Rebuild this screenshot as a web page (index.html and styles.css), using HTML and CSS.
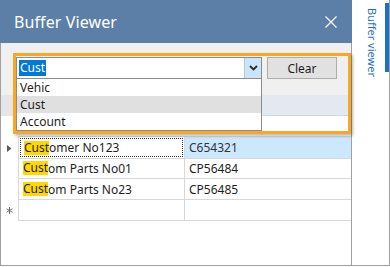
FILE: index.html
```html
<!DOCTYPE html>
<html lang="en">
<head>
    <meta charset="UTF-8">
    <meta name="viewport" content="width=device-width, initial-scale=1.0">
    <title>Buffer Viewer</title>
    <link rel="stylesheet" href="styles.css">
</head>
<body>
    <div class="screen">
        <div class="window">
            <div class="titlebar">
                <span class="title">Buffer Viewer</span>
                <svg class="close" width="12" height="12" viewBox="0 0 12 12">
                    <path d="M0.5 0.5 L11.5 11.5 M11.5 0.5 L0.5 11.5" stroke="#ffffff" stroke-width="1.2" fill="none"/>
                </svg>
            </div>

            <div class="content">
                <div class="toolbar">
                    <div class="combo">
                        <div class="combo-input"><span class="combo-sel">Cust</span></div>
                        <div class="combo-btn">
                            <svg width="9" height="6" viewBox="0 0 9 6">
                                <path d="M1 1 L4.5 4.5 L8 1" stroke="#2b2b2b" stroke-width="1.8" fill="none"/>
                            </svg>
                        </div>
                        <ul class="combo-list">
                            <li>Vehic</li>
                            <li class="hover">Cust</li>
                            <li>Account</li>
                        </ul>
                    </div>
                    <button class="clear-btn">Clear</button>
                </div>

                <div class="grid">
                    <div class="grid-row header">
                        <div class="row-head"></div>
                        <div class="cell"></div>
                        <div class="cell"></div>
                    </div>
                    <div class="grid-row filter">
                        <div class="row-head"></div>
                        <div class="cell"></div>
                        <div class="cell"></div>
                    </div>
                    <div class="grid-row current">
                        <div class="row-head">
                            <svg width="5" height="7" viewBox="0 0 5 7"><path d="M0 0 L4.5 3.5 L0 7 Z" fill="#5a5a5a"/></svg>
                        </div>
                        <div class="cell"><span class="focus"><mark>Cust</mark>omer No123</span></div>
                        <div class="cell selected">C654321</div>
                    </div>
                    <div class="grid-row">
                        <div class="row-head"></div>
                        <div class="cell"><mark>Cust</mark>om Parts No01</div>
                        <div class="cell">CP56484</div>
                    </div>
                    <div class="grid-row">
                        <div class="row-head"></div>
                        <div class="cell"><mark>Cust</mark>om Parts No23</div>
                        <div class="cell">CP56485</div>
                    </div>
                    <div class="grid-row">
                        <div class="row-head">
                            <svg width="7" height="7" viewBox="0 0 7 7">
                                <path d="M3.5 0 V7 M0.5 1.75 L6.5 5.25 M6.5 1.75 L0.5 5.25" stroke="#707070" stroke-width="1" fill="none"/>
                            </svg>
                        </div>
                        <div class="cell"></div>
                        <div class="cell"></div>
                    </div>
                </div>
            </div>

            <div class="focus-frame"></div>
        </div>

        <div class="side">
            <span class="side-label">Buffer viewer</span>
            <div class="side-bar"></div>
        </div>
    </div>
</body>
</html>
```

FILE: styles.css
```css
:root {
    --title-bg: #5b7fa6;
    --panel-bg: #f0f0f0;
    --border: #a0a0a0;
    --grid-line: #d8d8d8;
    --text: #1e1e1e;
    --accent: #1f6fc2;
    --orange: #f9a825;
}

* {
    margin: 0;
    padding: 0;
    box-sizing: border-box;
}

body {
    font-family: "Noto Sans", "Open Sans", sans-serif;
    font-size: 12px;
    color: var(--text);
    background: #ffffff;
    width: 390px;
    height: 267px;
    overflow: hidden;
}

.screen {
    display: flex;
    height: 266px;
}

/* dialog window */
.window {
    position: relative;
    width: 352px;
    display: flex;
    flex-direction: column;
}

.titlebar {
    height: 43px;
    background: var(--title-bg);
    display: flex;
    align-items: center;
    justify-content: space-between;
    padding: 0 15px 0 14px;
}

.title {
    color: #ffffff;
    font-size: 16px;
    letter-spacing: 0.1px;
}

.close {
    margin-top: 1px;
}

.content {
    flex: 1;
    border: 1px solid var(--border);
    border-top: none;
    background: #ffffff;
    display: flex;
    flex-direction: column;
}

.toolbar {
    height: 52px;
    background: var(--panel-bg);
    display: flex;
    align-items: flex-start;
    gap: 5px;
    padding: 14px 0 0 15px;
}

.combo {
    position: relative;
    width: 246px;
    height: 22px;
    display: flex;
    border: 1px solid #8c8c8c;
    background: #ffffff;
    z-index: 2;
}

.combo-input {
    flex: 1;
    display: flex;
    align-items: center;
    padding-left: 2px;
}

.combo-sel {
    background: #0078d7;
    color: #ffffff;
    line-height: 16px;
    padding: 0 1px;
}

.combo-btn {
    width: 17px;
    background: #cce4f7;
    border-left: 1px solid #a9c9e6;
    display: flex;
    align-items: center;
    justify-content: center;
}

.combo-list {
    position: absolute;
    top: 21px;
    left: -1px;
    width: 246px;
    list-style: none;
    background: #ffffff;
    border: 1px solid #8c8c8c;
    border-top: none;
}

.combo-list li {
    height: 17px;
    line-height: 17px;
    padding-left: 3px;
}

.combo-list li.hover {
    background: #e0e0e0;
}

.clear-btn {
    width: 70px;
    height: 22px;
    background: #e1e1e1;
    border: 1px solid #adadad;
    font-family: inherit;
    font-size: 12px;
    color: var(--text);
}

/* data grid */
.grid {
    display: flex;
    flex-direction: column;
}

.grid-row {
    display: grid;
    grid-template-columns: 17px 166px 1fr;
    height: 21px;
}

.grid-row .cell {
    border-left: 1px solid var(--grid-line);
    border-bottom: 1px solid var(--grid-line);
    padding-left: 4px;
    display: flex;
    align-items: center;
    white-space: nowrap;
}

.row-head {
    display: flex;
    align-items: center;
    justify-content: center;
}

.grid-row.header {
    background: #e3e9f1;
}

.grid-row.header .row-head {
    background: #e6e6e6;
}

.grid-row.header .cell {
    border-left: none;
    border-bottom-color: #cfd5dc;
}

.grid-row.filter .cell {
    border-left: none;
}

.grid-row.current .cell:nth-child(2) {
    padding: 1px;
}

.focus {
    flex: 1;
    align-self: stretch;
    display: flex;
    align-items: center;
    padding-left: 3px;
    border: 1px dotted #303030;
}

.cell.selected {
    background: #cce8ff;
    color: #333333;
}

mark {
    background: #ffd800;
    color: var(--text);
    line-height: 14px;
}

/* orange highlight around the search controls */
.focus-frame {
    position: absolute;
    left: 13px;
    top: 53px;
    width: 338px;
    height: 81px;
    border: 3px solid var(--orange);
    box-shadow: 2px 2px 3px rgba(0, 0, 0, 0.28);
    pointer-events: none;
    z-index: 3;
}

/* docked tab on the right */
.side {
    width: 38px;
    border-right: 1px solid var(--border);
    border-bottom: 1px solid var(--border);
    display: flex;
    align-items: flex-start;
}

.side-label {
    writing-mode: vertical-rl;
    color: var(--accent);
    font-size: 11px;
    margin: 8px 0 0 13px;
}

.side-bar {
    width: 4px;
    height: 69px;
    margin: 3px 0 0 auto;
    background: var(--accent);
}
```
